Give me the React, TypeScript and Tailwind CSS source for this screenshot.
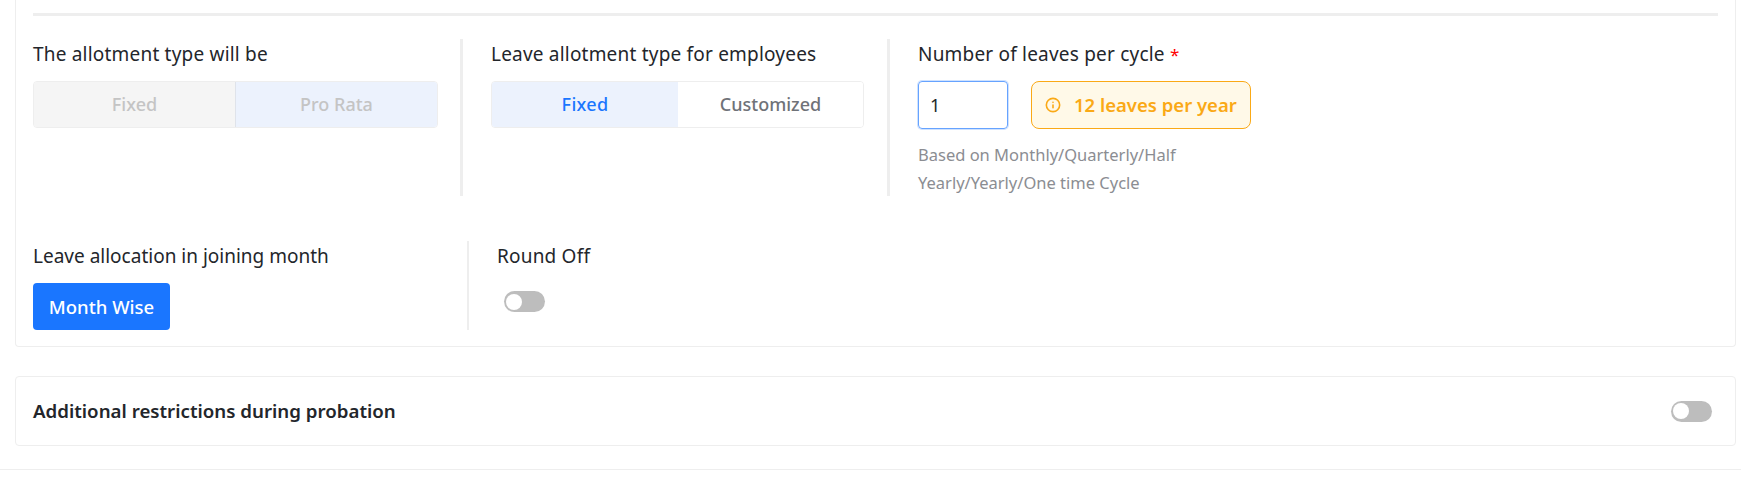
import { Info } from 'lucide-react';

function Toggle() {
    return (
        <div className="flex h-[21px] w-[41px] items-center rounded-full bg-[#bdbdbd] pl-[2px]">
            <div className="h-[16px] w-[16px] rounded-full bg-white"></div>
        </div>
    );
}

function Label({ children }: { children: React.ReactNode }) {
    return <div className="h-[24px] text-[19px] leading-[24px] tracking-[0.2px]">{children}</div>;
}

export default function App() {
    return (
        <div className="h-[477px] overflow-hidden bg-white font-['Noto_Sans','Liberation_Sans',sans-serif] text-[18px] text-[#23262b]">
            <div className="ml-[15px] mr-[5px] h-[347px] rounded-b border-x border-b border-[#eeeeee] px-[17px] pt-[13px]">
                <div className="h-[3px] bg-[#eeeeee]"></div>
                <div className="mt-[23px] flex h-[157px]">
                    <div className="w-[405px] pt-[3px]">
                        <Label>The allotment type will be</Label>
                        <div className="mt-[15px] flex h-[47px] overflow-hidden rounded border border-[#eeeeee] font-medium text-[#c4c4c4]">
                            <div className="flex flex-1 items-center justify-center bg-[#f5f5f5]">Fixed</div>
                            <div className="w-px bg-[#dfe3ea]"></div>
                            <div className="flex flex-1 items-center justify-center bg-[#ecf2fd]">Pro Rata</div>
                        </div>
                    </div>
                    <div className="ml-[22px] w-[3px] bg-[#eeeeee]"></div>
                    <div className="ml-[28px] w-[373px] pt-[3px]">
                        <Label>Leave allotment type for employees</Label>
                        <div className="mt-[15px] flex h-[47px] overflow-hidden rounded border border-[#eeeeee] font-medium">
                            <div className="flex w-[186px] items-center justify-center bg-[#ecf2fd] tracking-[0.3px] text-[#1a76ff]">Fixed</div>
                            <div className="flex flex-1 items-center justify-center bg-white text-[#6f7278]">Customized</div>
                        </div>
                    </div>
                    <div className="ml-[23px] w-[3px] bg-[#eeeeee]"></div>
                    <div className="ml-[28px] pt-[3px]">
                        <Label>
                            Number of leaves per cycle <span className="text-[17px] text-[#ff0000]">*</span>
                        </Label>
                        <div className="mt-[15px] flex items-center gap-[23px]">
                            <div className="flex h-[48px] w-[90px] items-center rounded border border-[#66a3ff] px-[11px] shadow-[0_0_0_1px_#cfe2ff]">1</div>
                            <div className="flex h-[48px] w-[220px] items-center gap-[13px] rounded-lg border border-[#faa916] bg-[#fff9e8] pl-[13px] text-[18.5px] font-semibold text-[#faa916]">
                                <Info className="h-[16px] w-[16px]" strokeWidth={2.4} />
                                12 leaves per year
                            </div>
                        </div>
                        <div className="mt-[12px] w-[290px] text-[16.5px] leading-[28px] text-[#8b8d92]">
                            Based on Monthly/Quarterly/Half Yearly/Yearly/One time Cycle
                        </div>
                    </div>
                </div>
                <div className="mt-[45px] flex h-[89px]">
                    <div className="w-[434px]">
                        <div className="h-[30px] text-[19px] leading-[30px]">Leave allocation in joining month</div>
                        <div className="mt-[12px] flex h-[47px] w-[137px] items-center justify-center rounded bg-[#1a76ff] text-[18.5px] font-medium text-white">Month Wise</div>
                    </div>
                    <div className="w-[2px] bg-[#eeeeee]"></div>
                    <div className="ml-[28px]">
                        <div className="h-[30px] text-[19px] leading-[30px] tracking-[0.2px]">Round Off</div>
                        <div className="ml-[7px] mt-[20px]">
                            <Toggle />
                        </div>
                    </div>
                </div>
            </div>
            <div className="ml-[15px] mr-[5px] mt-[29px] flex h-[70px] items-center justify-between rounded border border-[#eeeeee] pl-[17px] pr-[23px] text-[18.7px] font-semibold">
                <span>Additional restrictions during probation</span>
                <Toggle />
            </div>
            <div className="mt-[23px] h-px bg-[#eeeeee]"></div>
        </div>
    );
}
